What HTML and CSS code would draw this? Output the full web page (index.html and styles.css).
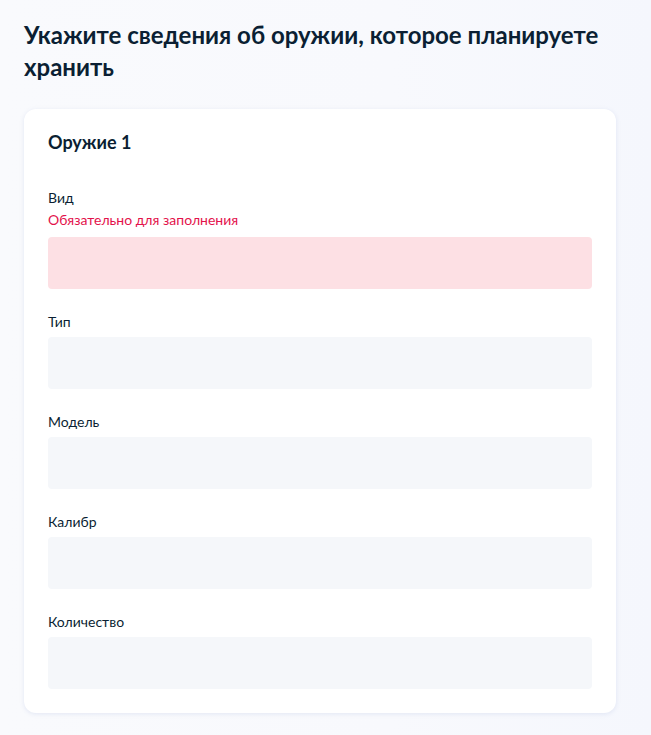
FILE: index.html
```html
<!DOCTYPE html>
<html lang="ru">
<head>
<meta charset="utf-8">
<title>Оружие</title>
<link rel="stylesheet" href="styles.css">
</head>
<body>
<main class="page">
  <h1 class="title">Укажите сведения об оружии, которое планируете хранить</h1>
  <section class="card">
    <h2 class="card-title">Оружие 1</h2>
    <div class="fields">
      <div class="field">
        <div class="label">Вид</div>
        <div class="error">Обязательно для заполнения</div>
        <div class="input input-error"></div>
      </div>
      <div class="field">
        <div class="label">Тип</div>
        <div class="input"></div>
      </div>
      <div class="field">
        <div class="label">Модель</div>
        <div class="input"></div>
      </div>
      <div class="field">
        <div class="label">Калибр</div>
        <div class="input"></div>
      </div>
      <div class="field">
        <div class="label">Количество</div>
        <div class="input"></div>
      </div>
    </div>
  </section>
</main>
</body>
</html>
```

FILE: styles.css
```css
html, body {
  margin: 0;
  padding: 0;
}
body {
  background: linear-gradient(90deg, #f9fafd 0%, #f8f9fd 60%, #f5f7fd 100%);
  font-family: Lato, "Noto Sans", sans-serif;
  color: #0b1f33;
  min-height: 735px;
}
.page {
  width: 592px;
  padding: 19px 0 0 24px;
}
.title {
  margin: 0 0 26px 0;
  font-size: 24px;
  line-height: 32px;
  font-weight: 700;
  color: #0b1f33;
}
.card {
  background: #ffffff;
  border-radius: 12px;
  box-shadow: 0 1px 4px rgba(160, 175, 215, 0.25);
  padding: 24px 24px 24px 24px;
}
.card-title {
  margin: 0;
  font-size: 18px;
  line-height: 18px;
  font-weight: 700;
}
.fields {
  display: flex;
  flex-direction: column;
  gap: 23px;
  margin-top: 37px;
}
.field {
  display: flex;
  flex-direction: column;
}
.label {
  font-size: 14px;
  line-height: 20px;
  margin-bottom: 5px;
}
.error {
  font-size: 14px;
  line-height: 20px;
  color: #e3124b;
  margin-top: -3px;
  margin-bottom: 7px;
}
.input {
  height: 52px;
  border-radius: 4px;
  background: #f5f7fa;
}
.input-error {
  background: #fde0e4;
}
```
